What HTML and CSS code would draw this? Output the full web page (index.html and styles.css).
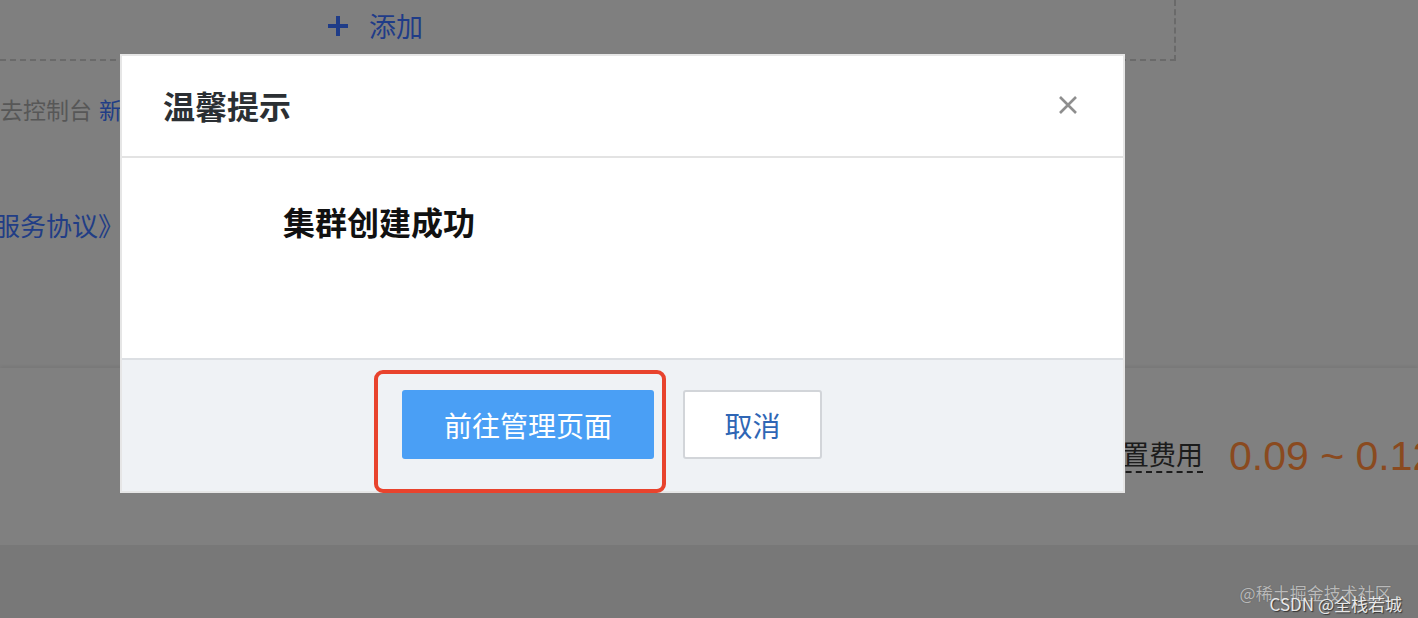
FILE: index.html
```html
<!DOCTYPE html>
<html lang="zh-CN">
<head>
<meta charset="utf-8">
<title>温馨提示</title>
<link rel="stylesheet" href="styles.css">
</head>
<body>
<div class="page">
  <div class="content">
    <div class="add-box">
      <div class="add-btn">
        <svg class="plus" width="22" height="22" viewBox="0 0 22 22"><path d="M11 1v20M1 11h20" stroke="#1f3c88" stroke-width="4"/></svg>
        <span>添加</span>
      </div>
    </div>
    <div class="hint-row"><span class="hint">去控制台</span><span class="link">新建</span></div>
    <div class="agree-row"><span class="link big">《服务协议》</span></div>
  </div>
  <div class="price-band">
    <span class="price-label">配置费用</span>
    <span class="price">0.09 ~ 0.12</span>
  </div>
  <div class="page-bottom"></div>

  <div class="modal">
    <div class="modal-head">
      <span class="modal-title">温馨提示</span>
      <svg class="close" width="20" height="20" viewBox="0 0 20 20"><path d="M2 2L18 18M18 2L2 18" stroke="#8e8e8e" stroke-width="2.6"/></svg>
    </div>
    <div class="modal-body">
      <div class="msg">集群创建成功</div>
    </div>
    <div class="modal-foot">
      <button class="btn primary">前往管理页面</button>
      <button class="btn ghost">取消</button>
    </div>
  </div>
  <div class="highlight"></div>

  <div class="watermark">
    <div class="wm1">@稀土掘金技术社区</div>
    <div class="wm2">CSDN @全栈若城</div>
  </div>
</div>
</body>
</html>
```
FILE: styles.css
```css
* { box-sizing: border-box; }
html, body { margin: 0; padding: 0; }
body {
  width: 1418px;
  height: 618px;
  overflow: hidden;
  background: #787878;
  font-family: "Noto Sans CJK SC", "Noto Sans", sans-serif;
}
.page {
  position: relative;
  width: 1418px;
  height: 618px;
  display: flex;
  flex-direction: column;
}
.content {
  height: 368px;
  background: #7f7f7f;
}
.add-box {
  width: 1176px;
  height: 61px;
  border-right: 2px dashed #6a6a6a;
  border-bottom: 2px dashed #6a6a6a;
  padding-left: 327px;
  display: flex;
  align-items: center;
}
.add-btn {
  display: flex;
  align-items: center;
  gap: 20px;
  color: #1f3c88;
  font-size: 27px;
  margin-top: -8px;
}
.hint-row {
  margin-top: 31px;
  height: 34px;
  display: flex;
  align-items: center;
  gap: 7px;
  font-size: 23px;
}
.hint { color: #575757; }
.link { color: #213d86; }
.agree-row {
  margin-top: 80px;
  height: 36px;
  display: flex;
  align-items: center;
  margin-left: -32px;
}
.link.big { font-size: 26px; }
.price-band {
  height: 177px;
  background: #808080;
  box-shadow: 0 -2px 3px rgba(0,0,0,0.06);
  display: flex;
  align-items: center;
  padding-left: 1095px;
  gap: 26px;
  white-space: nowrap;
}
.price-label {
  font-size: 27px;
  color: #1c1c1c;
  border-bottom: 2px dashed #1c1c1c;
  line-height: 1.2;
  margin-top: -2px;
}
.price {
  font-family: "Liberation Sans", Arial, sans-serif;
  font-size: 41px;
  color: #8a4a1f;
}
.page-bottom {
  flex: 1;
  background: #787878;
}
.modal {
  position: absolute;
  left: 120px;
  top: 54px;
  width: 1005px;
  height: 439px;
  border: 2px solid #e6e6e6;
  background: #fff;
  display: flex;
  flex-direction: column;
}
.modal-head {
  height: 102px;
  border-bottom: 2px solid #e3e3e3;
  display: flex;
  align-items: center;
  justify-content: space-between;
  padding: 0 45px 0 41px;
}
.modal-title {
  font-size: 32px;
  font-weight: 700;
  color: #2b2f33;
  margin-top: -2px;
}
.close { margin-top: -3px; }
.modal-body {
  height: 200px;
  padding: 40px 0 0 161px;
}
.msg {
  font-size: 32px;
  font-weight: 700;
  color: #111;
}
.modal-foot {
  flex: 1;
  background: #eff2f5;
  border-top: 2px solid #dcdfe3;
  display: flex;
  align-items: flex-start;
  padding: 30px 0 0 280px;
  gap: 29px;
}
.btn {
  font-family: "Noto Sans CJK SC", "Noto Sans", sans-serif;
  font-size: 28px;
  height: 69px;
  border-radius: 3px;
  cursor: pointer;
}
.btn.primary {
  width: 252px;
  background: #4a9ff5;
  border: none;
  color: #fff;
}
.btn.ghost {
  width: 139px;
  background: #fff;
  border: 2px solid #d2d5d9;
  color: #2f66b5;
}
.highlight {
  position: absolute;
  left: 374px;
  top: 370px;
  width: 292px;
  height: 123px;
  border: 4px solid #e8432d;
  border-radius: 9px;
}
.watermark {
  position: absolute;
  right: 16px;
  bottom: 6px;
  font-size: 17px;
  line-height: 1;
}
.wm1 {
  color: #b9b9b9;
  margin-left: -30px;
  text-shadow: 0 0 1px #555;
}
.wm2 {
  color: #e9e9e9;
  margin-top: -6px;
  text-shadow: 1px 1px 1px #333;
}
```
